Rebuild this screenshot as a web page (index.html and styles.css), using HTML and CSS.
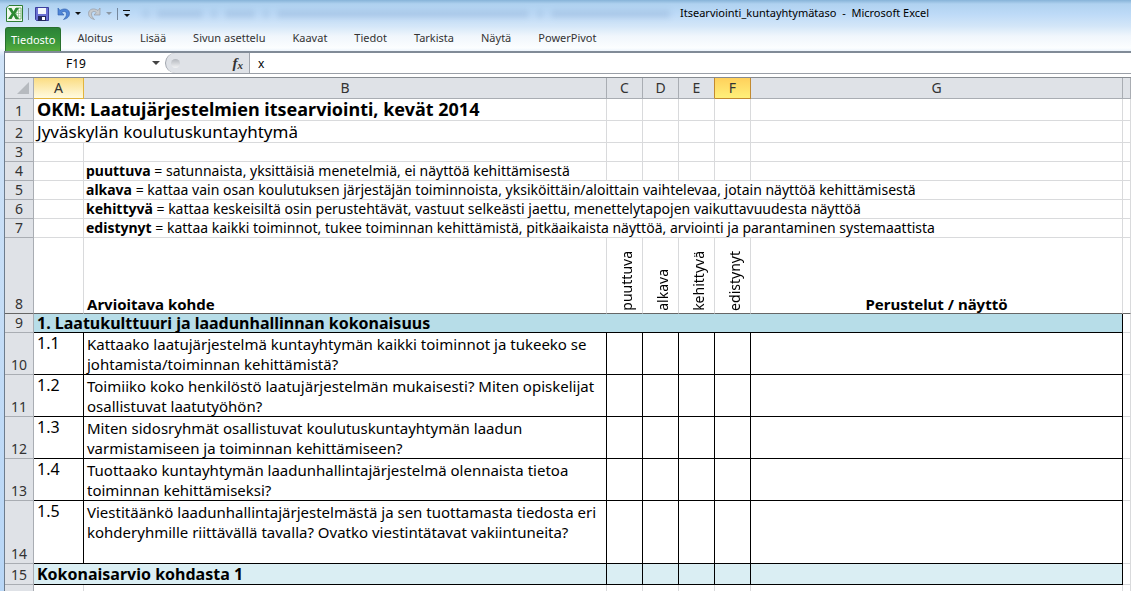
FILE: index.html
```
<!DOCTYPE html>
<html lang="fi">
<head>
<meta charset="utf-8">
<title>Itsearviointi_kuntayhtymätaso - Microsoft Excel</title>
<link rel="stylesheet" href="styles.css">
</head>
<body>
<div class="window">
  <header class="titlebar">
    <div class="quick">
      <svg class="logo" width="17" height="17" viewBox="0 0 17 17" aria-hidden="true">
        <path d="M3 0.500h13.500v16H0.500V3z" fill="#f1f8ef" stroke="#2f7d36"/>
        <path d="M10 3h5v11h-5z" fill="#fff" stroke="#5aa35c" stroke-width="0.8"/>
        <path d="M10 6h5M10 8.500h5M10 11h5M12.500 3v11" stroke="#8cc08b" stroke-width="0.7"/>
        <path d="M2 3h3.500l2 3.500L9.500 3H13L9.300 8.500 13 14H9.500l-2-3.500-2 3.500H2l3.700-5.500z" fill="#2c8a33"/>
      </svg>
      <span class="bar"></span>
      <button class="tool save" aria-label="Tallenna">
        <svg width="14" height="14" viewBox="0 0 14 14"><path d="M0.500 0.500h13v13h-12l-1-1z" fill="#6a70d2" stroke="#3b3f9c"/><rect x="3" y="1" width="8" height="6" fill="#f4f7fc"/><rect x="3" y="9" width="8" height="5" fill="#24285e"/><rect x="7" y="10" width="3" height="3" fill="#fff"/></svg>
      </button>
      <button class="tool" aria-label="Kumoa">
        <svg width="13" height="14" viewBox="0 0 13 14"><path d="M1 1v7h6L4.800 5.500C7 3.500 9.500 4.500 9.500 7c0 2-1 3.500-3 5.500 4-1 6-3 6-6 0-4.500-5.500-6-9.500-3z" fill="#4f86d8" stroke="#2d5aa8" stroke-width="0.600"/></svg>
      </button>
      <span class="caret"></span>
      <button class="tool redo" aria-label="Tee uudelleen">
        <svg width="13" height="14" viewBox="0 0 13 14"><path d="M12 1v7H6l2.200-2.500C6 3.500 3.500 4.500 3.500 7c0 2 1 3.500 3 5.500-4-1-6-3-6-6C0.500 2 6 0.500 10 3.500z" fill="#c6cace" stroke="#959ba3" stroke-width="0.700"/></svg>
      </button>
      <span class="caret dim"></span>
      <span class="bar"></span>
      <span class="more"></span>
      <div class="glass" aria-hidden="true"><i class="dot"></i><i class="word"></i><i class="dot"></i><i class="word short"></i><i class="dot"></i><i class="word long"></i><i class="dot"></i><i class="word rest"></i></div>
    </div>
    <h1 class="title">Itsearviointi_kuntayhtymätaso&nbsp; -&nbsp; Microsoft Excel</h1>
  </header>
  <nav class="tabs">
    <button class="tab file">Tiedosto</button>
    <button class="tab">Aloitus</button>
    <button class="tab">Lisää</button>
    <button class="tab">Sivun asettelu</button>
    <button class="tab">Kaavat</button>
    <button class="tab">Tiedot</button>
    <button class="tab">Tarkista</button>
    <button class="tab">Näytä</button>
    <button class="tab">PowerPivot</button>
  </nav>
  <main class="book">
    <div class="formula">
      <input class="name" aria-label="Nimiruutu" value="F19">
      <button class="drop" aria-label="Nimiluettelo"><span class="caret grey"></span></button>
      <div class="fxbar"><span class="knob"></span><button class="fx" aria-label="Lisää funktio">f<sub>x</sub></button></div>
      <input class="value" aria-label="Kaavarivi" value="x">
    </div>
    <table class="sheet">
      <colgroup><col class="c-num"><col class="c-a"><col class="c-b"><col class="c-s"><col class="c-s"><col class="c-s"><col class="c-s"><col class="c-g"><col></colgroup>
      <thead>
        <tr><th class="corner"><svg width="12" height="12" viewBox="0 0 12 12" aria-hidden="true"><path d="M12 0v12H0z" fill="#b6babf"/></svg></th><th class="hot">A</th><th>B</th><th>C</th><th>D</th><th class="before">E</th><th class="current">F</th><th>G</th><th></th></tr>
      </thead>
      <tbody>
        <tr class="r22"><th>1</th><td colspan="2" class="big"><b>OKM: Laatujärjestelmien itsearviointi, kevät 2014</b></td><td></td><td></td><td></td><td></td><td></td><td></td></tr>
        <tr class="r22"><th>2</th><td colspan="2" class="sub">Jyväskylän koulutuskuntayhtymä</td><td></td><td></td><td></td><td></td><td></td><td></td></tr>
        <tr class="r19"><th>3</th><td></td><td></td><td></td><td></td><td></td><td></td><td></td><td></td></tr>
        <tr class="r19"><th>4</th><td></td><td class="note"><b>puuttuva</b> = satunnaista, yksittäisiä menetelmiä, ei näyttöä kehittämisestä</td><td></td><td></td><td></td><td></td><td></td><td></td></tr>
        <tr class="r19"><th>5</th><td></td><td class="note" colspan="6"><b>alkava</b> = kattaa vain osan koulutuksen järjestäjän toiminnoista, yksiköittäin/aloittain vaihtelevaa, jotain näyttöä kehittämisestä</td><td></td></tr>
        <tr class="r19"><th>6</th><td></td><td class="note" colspan="6"><b>kehittyvä</b> = kattaa keskeisiltä osin perustehtävät, vastuut selkeästi jaettu, menettelytapojen vaikuttavuudesta näyttöä</td><td></td></tr>
        <tr class="r19"><th>7</th><td></td><td class="note" colspan="6"><b>edistynyt</b> = kattaa kaikki toiminnot, tukee toiminnan kehittämistä, pitkäaikaista näyttöä, arviointi ja parantaminen systemaattista</td><td></td></tr>
        <tr class="r76"><th>8</th><td></td><td class="head">Arvioitava kohde</td><td class="turn"><span>puuttuva</span></td><td class="turn"><span>alkava</span></td><td class="turn"><span>kehittyvä</span></td><td class="turn"><span>edistynyt</span></td><td class="head mid">Perustelut / näyttö</td><td></td></tr>
        <tr class="r19 section"><th>9</th><td colspan="7">1. Laatukulttuuri ja laadunhallinnan kokonaisuus</td><td></td></tr>
        <tr class="r42 item"><th>10</th><td class="no">1.1</td><td>Kattaako laatujärjestelmä kuntayhtymän kaikki toiminnot ja tukeeko se<br>johtamista/toiminnan kehittämistä?</td><td></td><td></td><td></td><td></td><td></td><td></td></tr>
        <tr class="r42 item"><th>11</th><td class="no">1.2</td><td>Toimiiko koko henkilöstö laatujärjestelmän mukaisesti? Miten opiskelijat<br>osallistuvat laatutyöhön?</td><td></td><td></td><td></td><td></td><td></td><td></td></tr>
        <tr class="r42 item"><th>12</th><td class="no">1.3</td><td>Miten sidosryhmät osallistuvat koulutuskuntayhtymän laadun<br>varmistamiseen ja toiminnan kehittämiseen?</td><td></td><td></td><td></td><td></td><td></td><td></td></tr>
        <tr class="r42 item"><th>13</th><td class="no">1.4</td><td>Tuottaako kuntayhtymän laadunhallintajärjestelmä olennaista tietoa<br>toiminnan kehittämiseksi?</td><td></td><td></td><td></td><td></td><td></td><td></td></tr>
        <tr class="r63 item"><th>14</th><td class="no">1.5</td><td>Viestitäänkö laadunhallintajärjestelmästä ja sen tuottamasta tiedosta eri<br>kohderyhmille riittävällä tavalla? Ovatko viestintätavat vakiintuneita?</td><td></td><td></td><td></td><td></td><td></td><td></td></tr>
        <tr class="r21 item total"><th>15</th><td colspan="2">Kokonaisarvio kohdasta 1</td><td></td><td></td><td></td><td></td><td></td><td></td></tr>
        <tr class="r21"><th>16</th><td></td><td></td><td></td><td></td><td></td><td></td><td></td><td></td></tr>
      </tbody>
    </table>
  </main>
</div>
</body>
</html>
```
FILE: styles.css
```
* { box-sizing: border-box; }
body { margin: 0; font-family: "Noto Sans", "Open Sans", sans-serif; color: #000; }
button, input { font: inherit; color: inherit; border: 0; background: none; padding: 0; margin: 0; min-width: 0; }
.window { height: 100vh; overflow: hidden; display: flex; flex-direction: column; background: linear-gradient(#86b3d8 0, #b0d2f0 4px, #bddaf7 14px, #d3e6f8 26px, #f0f6fc 36px, #fcfeff 48px, #d0e3f7 56px, #b8d6f6 100%); }
.titlebar { display: flex; height: 27px; flex: none; }
.quick { display: flex; align-items: center; gap: 5px; padding-left: 6px; width: 680px; height: 27px; flex: none; }
.logo { flex: none; }
.bar { width: 1px; height: 12px; background: #75879c; margin-left: 0; }
.tool { display: flex; }
.save { margin: 0 3px 0 1px; }
.redo { margin-left: 2px; }
.caret { border: 3px solid transparent; border-top-color: #111; border-bottom: 0; }
.caret.dim { border-top-color: #8b97a4; }
.caret.grey { border-width: 4px 4px 0; border-top-color: #444; }
.more { width: 7px; height: 7px; border-top: 1px solid #111; display: flex; align-items: flex-end; justify-content: center; }
.more::after { content: ""; border: 3px solid transparent; border-top-color: #111; border-bottom: 0; }
.glass { flex: 1; display: flex; align-items: center; gap: 8px; padding: 0 10px 0 8px; filter: blur(3px); opacity: 0.25; }
.dot, .word { height: 6px; background: #5d80ad; }
.dot { width: 6px; }
.word { width: 46px; }
.short { width: 30px; }
.long { width: 252px; }
.rest { flex: 1; }
.title { margin: 0; font-size: 11px; font-weight: 400; line-height: 26px; white-space: nowrap; }
.tabs { display: flex; align-items: stretch; height: 24px; flex: none; padding-left: 5px; }
.tab { font-size: 11px; line-height: 22px; padding: 0 14px 2px 13px; color: #333; }
.tab.file { padding: 0 5px; margin-right: 3px; color: #fff; background: linear-gradient(#2c8237, #35933a 50%, #55ab3c); border: 1px solid #27702d; border-bottom: 0; border-radius: 3px 3px 0 0; }
.book { flex: 1; min-height: 0; overflow: hidden; margin-left: 4px; border-left: 1px solid #6d7c8d; border-top: 2px solid #818b97; background: #fff; }
.formula { display: flex; height: 21px; border-bottom: 1px solid #9a9fa7; font-size: 12px; background: #fff; }
.name { width: 142px; text-align: center; }
.drop { width: 18px; display: flex; align-items: center; justify-content: center; }
.fxbar { width: 85px; border: 1px solid #a0a5ad; border-width: 0 1px 0 1px; border-radius: 11px 0 0 11px; background: #dfe2e7; display: flex; align-items: center; justify-content: space-between; padding: 0 6px 0 5px; }
.knob { width: 9px; height: 9px; border-radius: 50%; background: linear-gradient(#b4b8be, #f2f3f5); }
.fx { font: italic bold 15px "Liberation Serif", serif; line-height: 18px; color: #333; }
.fx sub { font-size: 11px; line-height: 1; vertical-align: -1px; }
.value { flex: 1; padding-left: 8px; }
.sheet { width: 100%; table-layout: fixed; border-collapse: separate; border-spacing: 0; border-top: 1px solid #868b91; margin-top: 3px; }
.c-num { width: 29px; } .c-a { width: 50px; } .c-b { width: 523px; } .c-s { width: 36px; } .c-g { width: 372px; }
th, td { padding: 0 3px; white-space: nowrap; border: solid #d9dadc; border-width: 0 1px 1px 0; }
th { padding: 0; font-weight: 400; font-size: 14px; line-height: 18px; color: #333; background: #dfe2e7; border-color: #a9adb3; vertical-align: bottom; }
thead th { height: 21px; vertical-align: middle; }
.corner { padding-right: 4px; }
.corner svg { display: block; margin-left: auto; }
.hot { background: linear-gradient(#fbdd83, #fffbe0); border-color: #e2b43c; }
.before { border-right-color: #c28a30; }
.current { background: linear-gradient(#ffd05c, #fff07a); border-color: #c28a30; }
.r19 > * { height: 19px; } .r21 > * { height: 21px; } .r22 > * { height: 22px; } .r42 > * { height: 42px; } .r63 > * { height: 63px; } .r76 > * { height: 76px; }
.big { font-size: 18px; line-height: 21px; }
.sub { font-size: 17px; line-height: 21px; }
.note { font-size: 14px; line-height: 18px; padding: 0 2px; }
.head { font-size: 15px; line-height: 18px; font-weight: 700; vertical-align: bottom; }
.mid { text-align: center; }
.r76 > * { border-bottom-color: #666; }
.turn { vertical-align: bottom; font-size: 14px; line-height: 20px; padding: 0 5px 2px 0; }
.turn span { display: block; writing-mode: vertical-rl; transform: rotate(180deg); margin-left: auto; }
.section td { font-size: 16px; line-height: 18px; font-weight: 700; }
.section td:nth-child(2) { background: #b7dde8; border-color: #000; }
.item td { font-size: 15px; line-height: 20px; padding-top: 1px; vertical-align: top; border-color: #000; }
.item .no { font-size: 16px; padding-top: 0; }
.item td:last-child { border-color: #d9dadc; }
.total td { font-size: 16px; font-weight: 700; padding-top: 0; background: #daeef3; }
.total td:last-child { background: none; }
```
